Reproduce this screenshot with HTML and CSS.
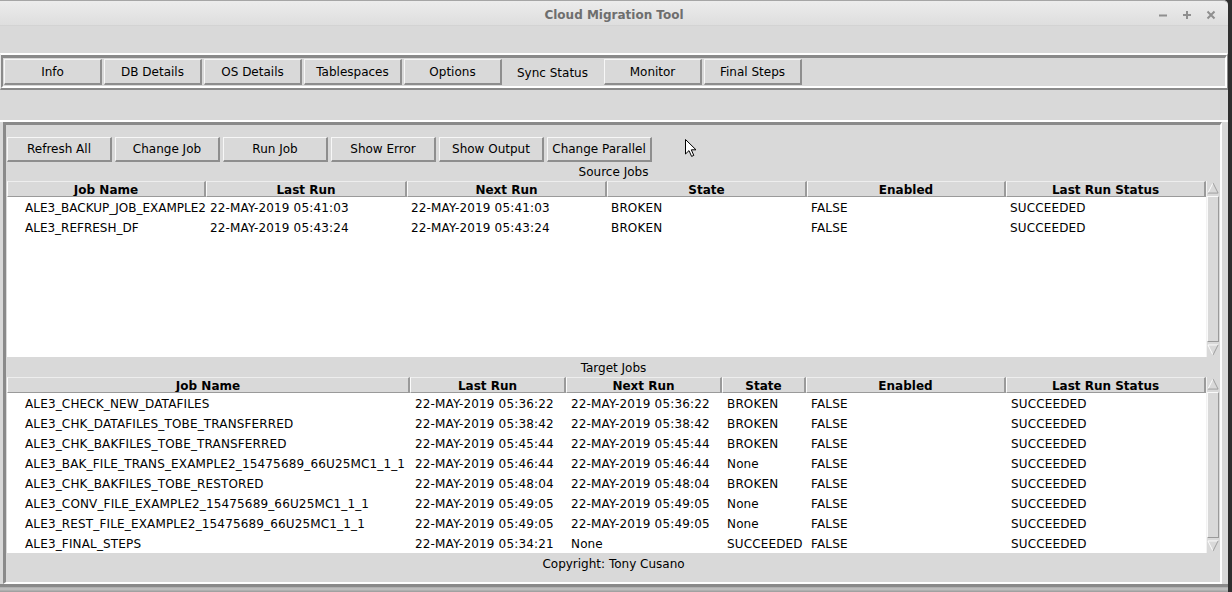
FILE: index.html
```html
<!DOCTYPE html>
<html>
<head>
<meta charset="utf-8">
<link rel="stylesheet" href="styles.css">
</head>
<body>
<div class="window">
  <div class="titlebar">
    <span class="title">Cloud Migration Tool</span>
    <div class="controls">
      <svg width="10" height="10" viewBox="0 0 10 10"><path d="M1 5.5H9" stroke="#8f8f8f" stroke-width="2"/></svg>
      <svg width="10" height="10" viewBox="0 0 10 10"><path d="M1 5H9M5 1V9" stroke="#8f8f8f" stroke-width="2"/></svg>
      <svg width="10" height="10" viewBox="0 0 10 10"><path d="M1.5 1.5L8.5 8.5M8.5 1.5L1.5 8.5" stroke="#8f8f8f" stroke-width="2"/></svg>
    </div>
  </div>
  <div class="menuarea"></div>
  <div class="tabbar">
    <div class="tabbar-inner">
      <div class="tab">Info</div>
      <div class="tab">DB Details</div>
      <div class="tab">OS Details</div>
      <div class="tab">Tablespaces</div>
      <div class="tab">Options</div>
      <div class="tab active">Sync Status</div>
      <div class="tab">Monitor</div>
      <div class="tab">Final Steps</div>
    </div>
  </div>
  <div class="spacer"></div>
  <div class="content">
    <div class="content-inner">
      <div class="toolbar">
        <div class="btn">Refresh All</div>
        <div class="btn">Change Job</div>
        <div class="btn">Run Job</div>
        <div class="btn">Show Error</div>
        <div class="btn">Show Output</div>
        <div class="btn">Change Parallel</div>
      </div>
      <div class="section-label src-label">Source Jobs</div>
      <div class="table source">
        <div class="grid">
          <div class="th">Job Name</div><div class="th">Last Run</div><div class="th">Next Run</div><div class="th">State</div><div class="th">Enabled</div><div class="th">Last Run Status</div>
          <div class="td first">ALE3_BACKUP_JOB_EXAMPLE2</div><div class="td">22-MAY-2019 05:41:03</div><div class="td">22-MAY-2019 05:41:03</div><div class="td">BROKEN</div><div class="td">FALSE</div><div class="td">SUCCEEDED</div>
          <div class="td first">ALE3_REFRESH_DF</div><div class="td">22-MAY-2019 05:43:24</div><div class="td">22-MAY-2019 05:43:24</div><div class="td">BROKEN</div><div class="td">FALSE</div><div class="td">SUCCEEDED</div>
        </div>
        <div class="scrollbar">
          <svg class="arrow" width="13" height="14" viewBox="0 0 13 14"><path d="M1 12.5L6.5 1.5L12 12.5Z" fill="#d9d9d9"/><path d="M1 12.5L6.5 1.5" stroke="#fff" stroke-width="1"/><path d="M6.5 1.5L12 12.5H1" stroke="#9a9a9a" stroke-width="1" fill="none"/></svg>
          <div class="thumb"></div>
          <svg class="arrow" width="13" height="14" viewBox="0 0 13 14"><path d="M1 1.5L6.5 12.5L12 1.5Z" fill="#d9d9d9"/><path d="M12 1.5H1L6.5 12.5" stroke="#fff" stroke-width="1" fill="none"/><path d="M6.5 12.5L12 1.5" stroke="#9a9a9a" stroke-width="1"/></svg>
        </div>
      </div>
      <div class="section-label tgt-label">Target Jobs</div>
      <div class="table target">
        <div class="grid">
          <div class="th">Job Name</div><div class="th">Last Run</div><div class="th">Next Run</div><div class="th">State</div><div class="th">Enabled</div><div class="th">Last Run Status</div>
          <div class="td first">ALE3_CHECK_NEW_DATAFILES</div><div class="td">22-MAY-2019 05:36:22</div><div class="td">22-MAY-2019 05:36:22</div><div class="td">BROKEN</div><div class="td">FALSE</div><div class="td">SUCCEEDED</div>
          <div class="td first">ALE3_CHK_DATAFILES_TOBE_TRANSFERRED</div><div class="td">22-MAY-2019 05:38:42</div><div class="td">22-MAY-2019 05:38:42</div><div class="td">BROKEN</div><div class="td">FALSE</div><div class="td">SUCCEEDED</div>
          <div class="td first">ALE3_CHK_BAKFILES_TOBE_TRANSFERRED</div><div class="td">22-MAY-2019 05:45:44</div><div class="td">22-MAY-2019 05:45:44</div><div class="td">BROKEN</div><div class="td">FALSE</div><div class="td">SUCCEEDED</div>
          <div class="td first">ALE3_BAK_FILE_TRANS_EXAMPLE2_15475689_66U25MC1_1_1</div><div class="td">22-MAY-2019 05:46:44</div><div class="td">22-MAY-2019 05:46:44</div><div class="td">None</div><div class="td">FALSE</div><div class="td">SUCCEEDED</div>
          <div class="td first">ALE3_CHK_BAKFILES_TOBE_RESTORED</div><div class="td">22-MAY-2019 05:48:04</div><div class="td">22-MAY-2019 05:48:04</div><div class="td">BROKEN</div><div class="td">FALSE</div><div class="td">SUCCEEDED</div>
          <div class="td first">ALE3_CONV_FILE_EXAMPLE2_15475689_66U25MC1_1_1</div><div class="td">22-MAY-2019 05:49:05</div><div class="td">22-MAY-2019 05:49:05</div><div class="td">None</div><div class="td">FALSE</div><div class="td">SUCCEEDED</div>
          <div class="td first">ALE3_REST_FILE_EXAMPLE2_15475689_66U25MC1_1_1</div><div class="td">22-MAY-2019 05:49:05</div><div class="td">22-MAY-2019 05:49:05</div><div class="td">None</div><div class="td">FALSE</div><div class="td">SUCCEEDED</div>
          <div class="td first">ALE3_FINAL_STEPS</div><div class="td">22-MAY-2019 05:34:21</div><div class="td">None</div><div class="td">SUCCEEDED</div><div class="td">FALSE</div><div class="td">SUCCEEDED</div>
        </div>
        <div class="scrollbar">
          <svg class="arrow" width="13" height="14" viewBox="0 0 13 14"><path d="M1 12.5L6.5 1.5L12 12.5Z" fill="#d9d9d9"/><path d="M1 12.5L6.5 1.5" stroke="#fff" stroke-width="1"/><path d="M6.5 1.5L12 12.5H1" stroke="#9a9a9a" stroke-width="1" fill="none"/></svg>
          <div class="thumb"></div>
          <svg class="arrow" width="13" height="14" viewBox="0 0 13 14"><path d="M1 1.5L6.5 12.5L12 1.5Z" fill="#d9d9d9"/><path d="M12 1.5H1L6.5 12.5" stroke="#fff" stroke-width="1" fill="none"/><path d="M6.5 12.5L12 1.5" stroke="#9a9a9a" stroke-width="1"/></svg>
        </div>
      </div>
      <div class="footer">Copyright: Tony Cusano</div>
    </div>
  </div>
  <div class="bottom-edge"></div>
  <svg class="cursor" width="14" height="20" viewBox="0 0 14 20"><path d="M1.5 1.5V16L5 12.6L7.6 18.4L9.8 17.4L7.3 11.8H12Z" fill="#fff" stroke="#000" stroke-width="1" stroke-linejoin="miter"/></svg>
</div>
</body>
</html>
```
FILE: styles.css
```css
* { box-sizing: border-box; }
html, body { margin: 0; padding: 0; }
body {
  background: #2f2f2f;
  width: 1232px;
  height: 592px;
  overflow: hidden;
  font-family: "DejaVu Sans", "Liberation Sans", sans-serif;
  font-size: 12px;
  color: #000;
}
.window {
  position: relative;
  width: 1228px;
  height: 592px;
  background: #d9d9d9;
  border-top-right-radius: 5px;
  display: flex;
  flex-direction: column;
}
.titlebar {
  height: 26px;
  flex: none;
  border-top: 1px solid #a5a5a5;
  border-top-right-radius: 5px;
  background: linear-gradient(#ececec, #dedede);
  border-bottom: 1px solid #d3d3d3;
  display: flex;
  align-items: center;
  justify-content: center;
  position: relative;
}
.title {
  font-weight: bold;
  color: #6e6e6e;
  font-size: 12px;
  margin-top: 3px;
}
.controls {
  position: absolute;
  right: 12px;
  top: 9px;
  display: flex;
  gap: 14px;
}
.controls svg { display: block; }
.menuarea { height: 27px; flex: none; }
.tabbar {
  height: 37px;
  flex: none;
  border-style: solid;
  border-width: 2px 1px 2px 1px;
  border-color: #fff #8a8a8a #8a8a8a #e8e8e8;
}
.tabbar-inner {
  height: 100%;
  border-style: solid;
  border-width: 3px 2px 2px 2px;
  border-color: #8a8a8a #fff #fff #8a8a8a;
  padding: 1px 0 1px 1px;
  display: flex;
  gap: 2px;
}
.tab {
  width: 98px;
  height: 26px;
  border-style: solid;
  border-width: 1px 2px 2px 1px;
  border-color: #f7f7f7 #8e8e8e #8e8e8e #f7f7f7;
  display: flex;
  align-items: center;
  justify-content: center;
}
.tab.active {
  border-color: transparent;
  padding-top: 3px;
}
.spacer { height: 30px; flex: none; }
.content {
  flex: none;
  height: 467px;
  border-top: 2px solid #fff;
  border-bottom: 3px solid #8a8a8a;
  padding: 0 6px 0 3px;
}
.content-inner {
  height: 100%;
  border-style: solid;
  border-width: 3px 2px 2px 3px;
  border-color: #8a8a8a #fff #fff #8a8a8a;
  padding-left: 1px;
  display: flex;
  flex-direction: column;
}
.toolbar {
  display: flex;
  gap: 3px;
  padding-top: 12px;
  height: 37px;
  flex: none;
}
.btn {
  width: 105px;
  height: 25px;
  border-style: solid;
  border-width: 1px 2px 2px 1px;
  border-color: #f7f7f7 #8e8e8e #8e8e8e #f7f7f7;
  display: flex;
  align-items: center;
  justify-content: center;
}
.section-label {
  flex: none;
  display: flex;
  align-items: center;
  justify-content: center;
}
.src-label { height: 19px; padding-top: 1px; }
.tgt-label { height: 20px; padding-top: 2px; }
.table {
  flex: none;
  height: 176px;
  display: flex;
}
.grid {
  width: 1199px;
  display: grid;
  grid-auto-rows: 20px;
  grid-template-rows: 16px;
  background: #fff;
  align-content: start;
}
.source .grid { grid-template-columns: 199px 201px 200px 200px 199px 200px; }
.target .grid { grid-template-columns: 403px 156px 156px 84px 200px 200px; }
.th {
  height: 16px;
  background: #d9d9d9;
  font-weight: bold;
  text-align: center;
  line-height: 12px;
  padding-top: 2px;
  border-style: solid;
  border-width: 1px 2px 1px 1px;
  border-color: #eeeeee #9a9a9a #9a9a9a #fbfbfb;
  white-space: nowrap;
  overflow: hidden;
}
.td {
  padding-left: 4px;
  padding-top: 2px;
  line-height: 18px;
  letter-spacing: 0.15px;
  white-space: nowrap;
  overflow: hidden;
}
.td.first { padding-left: 18px; }
.source .td.first { letter-spacing: 0; overflow: visible; }
.target .td { padding-left: 5px; }
.target .td.first { padding-left: 18px; }
.scrollbar {
  width: 13px;
  height: 176px;
  background: #d9d9d9;
  border-left: 1px solid #f2f2f2;
  display: flex;
  flex-direction: column;
}
.arrow { display: block; flex: none; width: 12px; }
.thumb {
  flex: 1;
  border-style: solid;
  border-width: 1px;
  border-color: #fafafa #9a9a9a #9a9a9a #fafafa;
  margin: 1px 0;
}
.footer {
  height: 29px;
  flex: none;
  display: flex;
  justify-content: center;
  padding-top: 4px;
}
.bottom-edge {
  flex: 1;
  background: linear-gradient(#a9a9a9, #c4c4c4 40%, #9a9a9a);
}
.cursor {
  position: absolute;
  left: 684px;
  top: 138px;
}
```
